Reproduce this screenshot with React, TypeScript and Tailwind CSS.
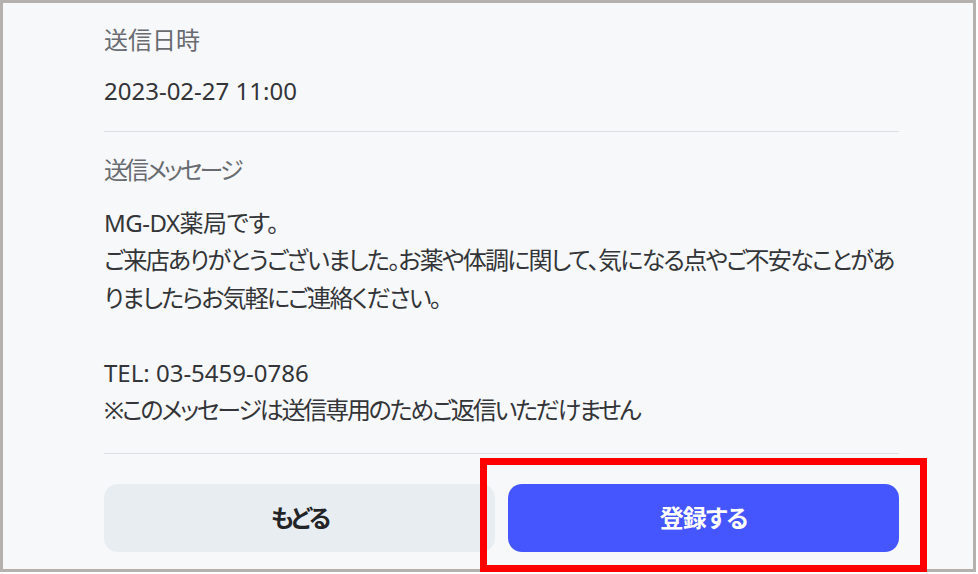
import React from 'react';

const MESSAGE_LINES = [
  { text: 'MG-DX薬局です。', cls: 'tracking-[-0.5px]' },
  { text: 'ご来店ありがとうございました。お薬や体調に関して、気になる点やご不安なことがあ', cls: 'tracking-[-1.75px]' },
  { text: 'りましたらお気軽にご連絡ください。', cls: 'tracking-[-1.75px]' },
  { text: '', cls: '' },
  { text: 'TEL: 03-5459-0786', cls: '' },
  { text: '※このメッセージは送信専用のためご返信いただけません', cls: 'tracking-[-2.2px]' },
];

export default function App() {
  return (
    <div
      className="relative w-[978px] h-[574px] bg-white text-[24px] leading-[37.5px] [font-feature-settings:'palt']"
      style={{ fontFamily: '"Noto Sans", "Noto Sans CJK JP", sans-serif' }}
    >
      <div className="w-[976px] h-[572px] border-[3px] border-[#b4b1af] bg-[#f7f8fa] overflow-hidden">
        <div className="ml-[101px] w-[795px]">
          {/* Sent date */}
          <div className="pt-[18px] pb-[22px] border-b border-[#dcdfe3]">
            <div className="text-[#686b70]">送信日時</div>
            <div className="mt-[13px] text-[#333538]">2023-02-27 11:00</div>
          </div>

          {/* Sent message */}
          <div className="pt-[19px] pb-[24px] border-b border-[#dcdfe3]">
            <div className="text-[#686b70] tracking-[-3px]">送信メッセージ</div>
            <div className="mt-[15px] text-[#333538]">
              {MESSAGE_LINES.map((line, i) => (
                <div key={i} className={`h-[37.5px] whitespace-nowrap ${line.cls}`}>
                  {line.text}
                </div>
              ))}
            </div>
          </div>

          {/* Actions */}
          <div className="mt-[30px] flex gap-[13px]">
            <button className="flex-1 h-[68px] rounded-[14px] bg-[#e8edf1] text-[#222426] font-bold tracking-[-3px]">
              もどる
            </button>
            <button className="flex-1 h-[68px] rounded-[14px] bg-[#4656ff] text-white font-bold tracking-[-1px]">
              登録する
            </button>
          </div>
        </div>
      </div>

      {/* Highlight box */}
      <div className="absolute left-[480px] top-[458px] w-[447px] h-[114px] border-[7px] border-[#ff0000]" />
    </div>
  );
}
